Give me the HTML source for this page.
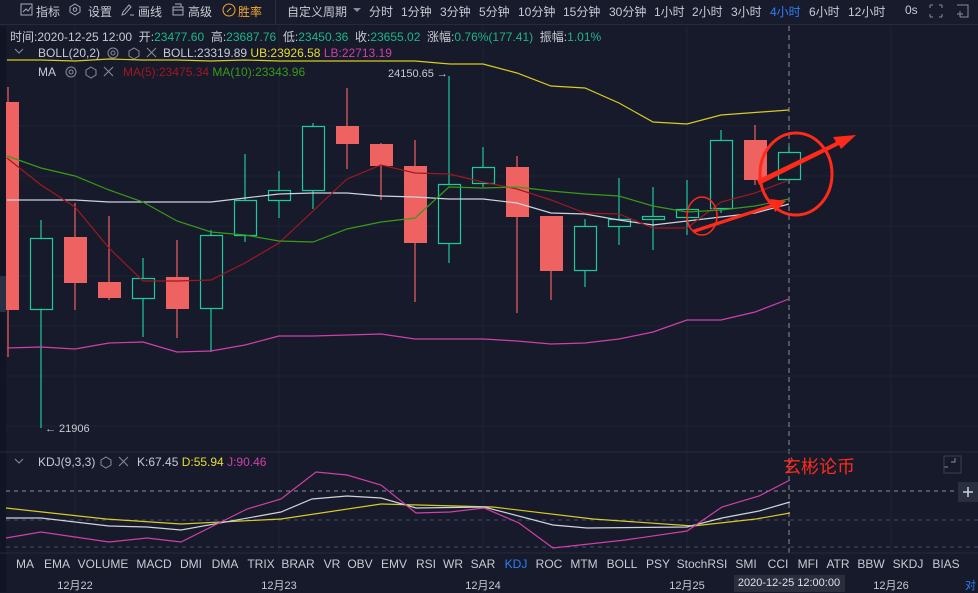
<!DOCTYPE html>
<html><head><meta charset="utf-8"><style>
*{margin:0;padding:0;box-sizing:border-box}
body{width:978px;height:592px;overflow:hidden;background:#161a2a;font-family:"Liberation Sans","Noto Sans CJK SC",sans-serif;font-size:12px;color:#c8cad3;position:relative}
.a{position:absolute;white-space:nowrap}
.c{transform:translateX(-50%)}
.g{color:#1fb58a}
</style></head><body>
<div class="a" style="left:0;top:0;width:978px;height:25px;background:#171b2c;border-bottom:1px solid #262a3a"></div>
<div class="a" style="left:275px;top:0;width:1px;height:25px;background:#2a2e3e"></div>
<svg class="a" style="left:0;top:0" width="978" height="25">
<g fill="none" stroke="#a8abb6" stroke-width="1">
<rect x="21" y="4" width="11" height="11"/><path d="M23 12l3-3 2 2 3-4"/>
<path d="M75 4l5 3v5l-5 3-5-3V7z"/><circle cx="75" cy="9.5" r="1.8"/>
<path d="M122 15l1-3 6-7 2 2-6 7zM130 15h4"/>
<path d="M173 7h10v8h-10zM175 4h6v3M173 10h10"/>
<circle cx="229" cy="10" r="6" stroke="#f0a830"/><path d="M227 12l4-4" stroke="#f0a830"/>
</g>
<path d="M353 8l4 4 4-4z" fill="#8a8d98"/>
<g fill="none" stroke="#8a8d98"><path d="M930 5h3M930 5v3M942 5h-3M942 5v3M930 17h3M930 17v-3M942 17h-3M942 17v-3"/><path d="M957 5h11v12h-8M960 11v6M957 14h6"/></g>
</svg>
<div class="a" style="left:36px;top:3px">指标</div>
<div class="a" style="left:88px;top:3px">设置</div>
<div class="a" style="left:138px;top:3px">画线</div>
<div class="a" style="left:188px;top:3px">高级</div>
<div class="a" style="left:238px;top:3px;color:#f0a830">胜率</div>
<div class="a" style="left:287px;top:3px">自定义周期</div>
<div class="a" style="left:369px;top:3px">分时</div>
<div class="a" style="left:401px;top:3px">1分钟</div>
<div class="a" style="left:440px;top:3px">3分钟</div>
<div class="a" style="left:479px;top:3px">5分钟</div>
<div class="a" style="left:518px;top:3px">10分钟</div>
<div class="a" style="left:563px;top:3px">15分钟</div>
<div class="a" style="left:609px;top:3px">30分钟</div>
<div class="a" style="left:654px;top:3px">1小时</div>
<div class="a" style="left:692px;top:3px">2小时</div>
<div class="a" style="left:731px;top:3px">3小时</div>
<div class="a" style="left:770px;top:3px;color:#2f7ef5">4小时</div>
<div class="a" style="left:809px;top:3px">6小时</div>
<div class="a" style="left:848px;top:3px">12小时</div>
<div class="a" style="left:905px;top:3px">0s</div>

<svg class="a" style="left:0;top:26px" width="978" height="566">
<g stroke="#1f2436" stroke-width="1">
<path d="M0 100h978M0 150h978M0 200h978M0 250h978M0 300h978M0 350h978M0 400h978"/>
<path d="M75 0v526M279 0v526M483 0v526M687 0v526M891 0v526"/>
</g>
<rect x="0" y="0" width="6" height="566" fill="#111423"/>
<rect x="0" y="250" width="6" height="36" fill="#2a3044"/>
<path d="M789 0v530" stroke="#8a8d98" stroke-dasharray="5,4"/>
<path d="M0 426h978" stroke="#262a3a"/>
<path d="M0 527h978" stroke="#262a3a"/>
<path d="M6 465h972" stroke="#8a8d98" stroke-dasharray="4,4"/>
<path d="M6 494h972M6 521h972" stroke="#474d70" stroke-dasharray="4,4"/>
</svg>

<svg class="a" style="left:0;top:0" width="978" height="592">
<g stroke="#1fc99a" fill="none" stroke-width="1.2">
<path d="M41 220v208M143 258v79M211 230v122M245 154v88M279 171v47M313 123v86M449 76v187M483 147v40M585 219v68M619 178v67M653 187v63M687 180v55M721 130v83M789 147v36"/>
<path d="M30.5 238.5h22v71h-22zM132.5 278.5h22v20h-22zM200.5 235.5h22v73h-22zM234.5 200.5h22v35h-22zM268.5 190.5h22v10h-22zM302.5 126.5h22v64h-22zM438.5 184.5h22v59h-22zM472.5 167.5h22v16h-22zM574.5 226.5h22v44h-22zM608.5 219.5h22v7h-22zM642.5 216.5h22v3h-22zM676.5 209.5h22v8h-22zM710.5 140.5h22v68h-22zM778.5 152.5h22v27h-22z" fill="#161a2a"/>
</g>
<g stroke="#ee6060" stroke-width="1.2">
<path d="M8 87v270M75 203v107M109 216v84M177 240v98M347 88v81M381 143v57M415 140v162M517 156v157M551 216v84M755 125v60"/>
</g>
<g fill="#ee6262">
<rect x="6" y="102" width="13" height="208"/><rect x="64" y="237" width="23" height="46"/><rect x="98" y="282" width="23" height="16"/><rect x="166" y="277" width="23" height="32"/><rect x="336" y="126" width="23" height="18"/><rect x="370" y="144" width="23" height="22"/><rect x="404" y="166" width="23" height="77"/><rect x="506" y="167" width="23" height="50"/><rect x="540" y="216" width="23" height="55"/><rect x="744" y="140" width="23" height="40"/>
</g>
<g fill="none" stroke-width="1.2">
<polyline stroke="#d8cc22" points="7,60 41,60 75,61 109,59 143,60 177,60 211,61 245,60 279,61 313,61 347,61 381,61 415,61 450,64 483,64 517,73 551,86 585,88 619,103 653,122 687,124 721,115 789,110"/>
<polyline stroke="#d0d2dc" points="7,200 41,200 75,200 109,202 143,202 177,202 211,202 245,198 279,194 313,193 347,193 381,196 415,197 449,199 483,199 517,203 551,213 585,214 619,220 653,225 687,221 721,217 755,213 789,204"/>
<polyline stroke="#d040a8" points="7,348 41,347 75,349 109,343 143,342 177,352 211,351 245,345 279,336 313,336 347,335 381,334 415,339 449,339 483,339 517,341 551,344 585,343 619,339 653,332 687,320 721,320 755,312 789,299"/>
<polyline stroke="#a01820" points="7,158 41,185 75,207 109,248 143,281 177,281 211,280 245,263 279,243 313,211 347,179 381,165 415,173 449,174 483,182 517,189 551,200 585,213 619,214 653,228 687,228 721,202 755,193 789,180"/>
<polyline stroke="#3a9a18" points="7,156 41,168 75,176 109,190 143,202 177,221 211,232 245,235 279,241 313,242 347,229 381,222 415,218 449,187 483,188 517,187 551,191 585,194 619,196 653,206 687,212 721,210 755,206 789,199"/>
<polyline stroke="#d8cc22" points="6,508 106,519 181,524 281,519 381,504 493,507 593,519 693,526 756,519 790,513"/>
<polyline stroke="#d0d2dc" points="6,518 41,518 109,526 147,527 181,530 281,512 312,499 347,496 381,498 416,508 484,507 553,525 587,528 687,527 722,518 759,511 790,502"/>
<polyline stroke="#d040a8" points="6,538 41,532 109,542 147,538 181,542 247,509 281,499 316,472 347,475 381,485 416,513 450,512 484,508 519,523 553,548 625,540 687,531 722,507 759,496 790,480"/>
</g>
<g stroke="#ff2a1a" fill="none">
<ellipse cx="796" cy="174" rx="36" ry="41" stroke-width="3"/>
<ellipse cx="702" cy="216" rx="15" ry="19" stroke-width="1.5"/>
</g>
<g fill="#ff2a1a">
<polygon points="692,230 772,204 770,199 786,201 775,212 773,207 694,233"/>
<polygon points="757,180 836,142 833,137 856,135 841,149 839,145 759,185"/>
</g>
<path d="M951 462h4v-4M948 467h-4v-4" stroke="#8a8d98" fill="none"/>
<rect x="944" y="456" width="17" height="17" fill="none" stroke="#3a3f52"/>
<rect x="958" y="482" width="20" height="20" fill="#2a2f40"/>
<path d="M968 487v10M963 492h10" stroke="#d0d2dc" stroke-width="1.5"/>
<rect x="734" y="575" width="111" height="17" fill="#2a2e3e"/>
<g fill="none" stroke="#8a8d98"><path d="M15 49l4 4 4-4"/><circle cx="113" cy="53" r="5"/><circle cx="113" cy="53" r="2"/><path d="M134 48l5 3v5l-5 3-5-3v-5z"/><path d="M147 48l9 9M156 48l-9 9"/>
<circle cx="71" cy="72" r="5"/><circle cx="71" cy="72" r="2"/><path d="M91 67l5 3v5l-5 3-5-3v-5z"/><path d="M104 67l9 9M113 67l-9 9"/>
<path d="M15 459l4 4 4-4"/><path d="M106 457l5 3v5l-5 3-5-3v-5z"/><path d="M119 457l9 9M128 457l-9 9"/></g>
</svg>

<div class="a" style="left:10px;top:28px">时间:2020-12-25 12:00 &nbsp;开:<span class="g">23477.60</span> &nbsp;高:<span class="g">23687.76</span> &nbsp;低:<span class="g">23450.36</span> &nbsp;收:<span class="g">23655.02</span> &nbsp;涨幅:<span class="g">0.76%(177.41)</span> &nbsp;振幅:<span class="g">1.01%</span></div>
<div class="a" style="left:38px;top:46px">BOLL(20,2)</div>
<div class="a" style="left:163px;top:46px">BOLL:23319.89 <span style="color:#e8dc30">UB:23926.58</span> <span style="color:#d040a8">LB:22713.19</span></div>
<div class="a" style="left:38px;top:65px">MA</div>
<div class="a" style="left:123px;top:65px;color:#a01820">MA(5):23475.34 <span style="color:#3a9a18">MA(10):23343.96</span></div>
<div class="a" style="left:388px;top:68px;font-size:11px">24150.65 →</div>
<div class="a" style="left:45px;top:423px;font-size:11px">← 21906</div>
<div class="a" style="left:38px;top:455px">KDJ(9,3,3)</div>
<div class="a" style="left:137px;top:455px">K:67.45 <span style="color:#e8dc30">D:55.94</span> <span style="color:#d040a8">J:90.46</span></div>
<div class="a" style="left:783px;top:453px;font-size:18px;color:#ff2a1a">玄彬论币</div>

<div class="a c" style="left:25px;top:557px">MA</div>
<div class="a c" style="left:57px;top:557px">EMA</div>
<div class="a c" style="left:103px;top:557px">VOLUME</div>
<div class="a c" style="left:154px;top:557px">MACD</div>
<div class="a c" style="left:191px;top:557px">DMI</div>
<div class="a c" style="left:225px;top:557px">DMA</div>
<div class="a c" style="left:261px;top:557px">TRIX</div>
<div class="a c" style="left:298px;top:557px">BRAR</div>
<div class="a c" style="left:332px;top:557px">VR</div>
<div class="a c" style="left:360px;top:557px">OBV</div>
<div class="a c" style="left:394px;top:557px">EMV</div>
<div class="a c" style="left:426px;top:557px">RSI</div>
<div class="a c" style="left:453px;top:557px">WR</div>
<div class="a c" style="left:483px;top:557px">SAR</div>
<div class="a c" style="left:516px;top:557px;color:#2f7ef5">KDJ</div>
<div class="a c" style="left:549px;top:557px">ROC</div>
<div class="a c" style="left:584px;top:557px">MTM</div>
<div class="a c" style="left:622px;top:557px">BOLL</div>
<div class="a c" style="left:658px;top:557px">PSY</div>
<div class="a c" style="left:702px;top:557px">StochRSI</div>
<div class="a c" style="left:746px;top:557px">SMI</div>
<div class="a c" style="left:778px;top:557px">CCI</div>
<div class="a c" style="left:808px;top:557px">MFI</div>
<div class="a c" style="left:838px;top:557px">ATR</div>
<div class="a c" style="left:871px;top:557px">BBW</div>
<div class="a c" style="left:908px;top:557px">SKDJ</div>
<div class="a c" style="left:946px;top:557px">BIAS</div>

<div class="a c" style="left:75px;top:577px;font-size:11px">12月22</div>
<div class="a c" style="left:279px;top:577px;font-size:11px">12月23</div>
<div class="a c" style="left:483px;top:577px;font-size:11px">12月24</div>
<div class="a c" style="left:687px;top:577px;font-size:11px">12月25</div>
<div class="a c" style="left:789px;top:577px;font-size:11px;color:#e0e2e8">2020-12-25 12:00:00</div>
<div class="a c" style="left:891px;top:577px;font-size:11px">12月26</div>
<div class="a" style="left:965px;top:577px;font-size:11px;color:#2f7ef5">对</div>
</body></html>
